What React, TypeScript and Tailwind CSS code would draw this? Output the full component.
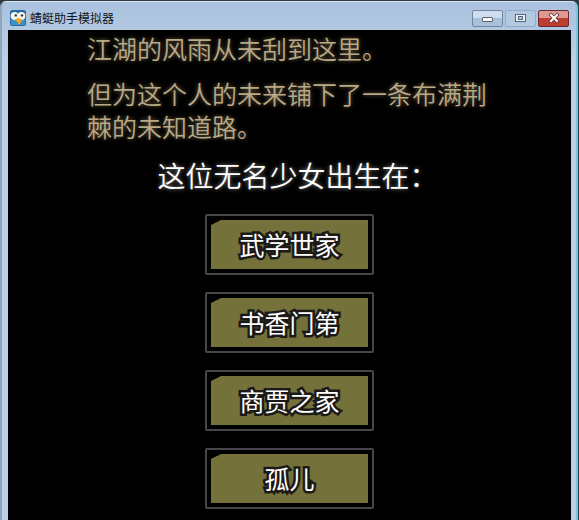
import type { ReactNode } from 'react';

const origins = ['武学世家', '书香门第', '商贾之家', '孤儿'];

const AppIcon = () => (
  <svg className="size-4" viewBox="0 0 16 16" aria-hidden="true">
    <rect x="0" y="0" width="16" height="16" rx="2.5" fill="#2868a8" />
    <path d="M1 10l4-1 6 0 4 1v4q0 1-1 1H2q-1 0-1-1z" fill="#3b91c5" />
    <circle cx="4.6" cy="6" r="3.9" fill="#f5f4e8" />
    <circle cx="11.4" cy="6" r="3.9" fill="#f5f4e8" />
    <circle cx="5.8" cy="5.4" r="1.2" fill="#29303c" />
    <circle cx="12" cy="5.4" r="1.2" fill="#29303c" />
    <path d="M5 9.4Q8 7 12 9.4L11 12.4 9 14.8 7.4 12z" fill="#eda526" />
  </svg>
);

type WindowButtonProps = { label: string; className: string; children: ReactNode };

const WindowButton = ({ label, className, children }: WindowButtonProps) => (
  <button
    type="button"
    aria-label={label}
    className={`flex h-[17px] w-[31px] items-center justify-center rounded-xs border ${className}`}
  >
    {children}
  </button>
);

const TitleBar = () => (
  <header className="flex h-7 items-center justify-between pt-1 pl-0.5">
    <div className="flex items-center gap-1">
      <AppIcon />
      <h1 className="text-xs text-[#10141c]">蜻蜓助手模拟器</h1>
    </div>
    <div className="flex gap-0.5 pr-0.5">
      <WindowButton
        label="最小化"
        className="border-[#6f86a3] bg-linear-to-b from-[#cfdeee] from-50% to-[#a9c0da] to-50%"
      >
        <svg className="h-3 w-4" viewBox="0 0 16 12" aria-hidden="true">
          <rect x="2.5" y="5.5" width="10" height="4" rx="0.5" fill="#fff" stroke="#56616f" />
        </svg>
      </WindowButton>
      <WindowButton label="最大化" className="border-[#94abc8] bg-[#b3c9e2]">
        <svg className="h-3 w-4" viewBox="0 0 16 12" aria-hidden="true">
          <rect x="2.5" y="2.5" width="10" height="7" fill="#eef3f8" stroke="#56657a" />
          <rect x="5.5" y="4.5" width="4" height="3" fill="#b3c9e2" stroke="#56657a" />
        </svg>
      </WindowButton>
      <WindowButton
        label="关闭"
        className="border-[#6d2b31] bg-linear-to-b from-[#dc9a90] from-45% to-[#bd3e30] to-50%"
      >
        <svg className="h-3 w-4" viewBox="0 0 16 12" aria-hidden="true">
          <path d="M5 3l6 6M11 3l-6 6" stroke="#6a3038" strokeWidth="3.6" strokeLinecap="square" />
          <path d="M5 3l6 6M11 3l-6 6" stroke="#fff" strokeWidth="2" strokeLinecap="square" />
        </svg>
      </WindowButton>
    </div>
  </header>
);

const OriginButton = ({ label }: { label: string }) => (
  <button type="button" className="w-[169px] rounded-xs border-2 border-[#47474b] bg-black p-1">
    <span className="flex h-[49px] items-center justify-center bg-[#74713a] text-[25px] text-white [clip-path:polygon(0_5px,10px_0,100%_0,100%_100%,0_100%)]">
      <span className="[-webkit-text-stroke:5px_#1c1a18] [paint-order:stroke_fill]">{label}</span>
    </span>
  </button>
);

const App = () => {
  return (
    <div className="flex min-h-screen flex-col overflow-hidden bg-[#343840] pt-px pr-px font-['Noto_Sans_CJK_SC',sans-serif]">
      <div className="flex grow flex-col rounded-t-md border-t border-r-2 border-l-2 border-t-[#d5e6f5] border-r-[#6fc9dc] border-l-[#8fa6bd] bg-linear-to-b from-[#a9c2dd] to-[#bdcfe8] to-[60px] pr-[5px] pl-1.5">
        <TitleBar />
        <main className="flex grow flex-col items-center bg-black">
          <div className="flex w-full max-w-[405px] flex-col gap-3 pt-0.5 text-[25px] leading-[33px] font-[350] text-[#b8a987] [text-shadow:0_0_4px_#75654a]">
            <p>江湖的风雨从未刮到这里。</p>
            <p>但为这个人的未来铺下了一条布满荆棘的未知道路。</p>
          </div>
          <h2 className="mt-3.5 pl-4 text-[28px] leading-[37px] font-[350] text-white [text-shadow:0_0_4px_#888]">
            这位无名少女出生在：
          </h2>
          <div className="mt-5 flex flex-col gap-[17px]">
            {origins.map((origin) => (
              <OriginButton key={origin} label={origin} />
            ))}
          </div>
        </main>
      </div>
    </div>
  );
};

export default App;
